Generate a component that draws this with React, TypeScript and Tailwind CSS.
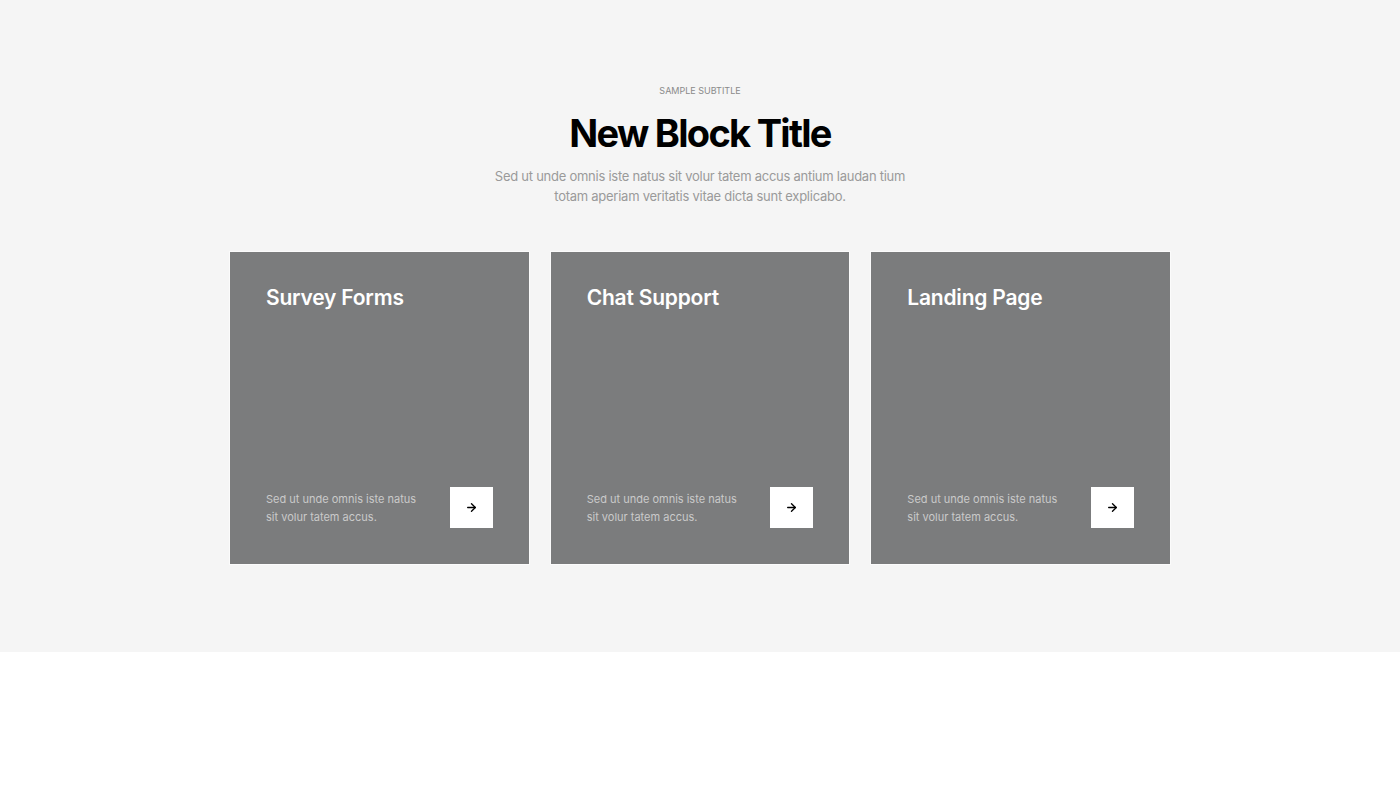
import { ArrowRight } from "lucide-react";

const cards = [
  { title: "Survey Forms" },
  { title: "Chat Support" },
  { title: "Landing Page" },
];

export default function App() {
  return (
    <div className="min-h-[788px] bg-white font-['Inter',sans-serif]">
      <section className="h-[652px] bg-[#f5f5f5] pt-[84px]">
        <div className="mx-auto flex w-[940px] flex-col items-center text-center">
          <p className="text-[9px] uppercase leading-[13px] text-[#8a8a8a]">Sample subtitle</p>
          <h1 className="mt-[12px] text-[38px] font-bold leading-[48px] tracking-[-0.045em] text-black">
            New Block Title
          </h1>
          <p className="mt-[9px] w-[430px] text-[13px] leading-[20px] tracking-[-0.02em] text-[#9a9a9a]">
            Sed ut unde omnis iste natus sit volur tatem accus antium laudan tium totam aperiam veritatis vitae dicta sunt explicabo.
          </p>
        </div>

        <div className="mx-auto mt-[46px] grid w-[940px] grid-cols-3 gap-[22px]">
          {cards.map((card) => (
            <div
              key={card.title}
              className="flex h-[312px] flex-col justify-between bg-[#7b7c7d] px-[36px] pb-[36px] pt-[32px] ring-1 ring-[#fbfbfb]"
            >
              <h2 className="text-[21px] font-semibold leading-[28px] tracking-[-0.01em] text-white">{card.title}</h2>
              <div className="flex items-center justify-between">
                <p className="w-[160px] text-[11px] leading-[18px] text-[#cacaca]">
                  Sed ut unde omnis iste natus sit volur tatem accus.
                </p>
                <button type="button" className="flex h-[41px] w-[43px] items-center justify-center bg-white text-black">
                  <ArrowRight size={13} strokeWidth={2.5} />
                </button>
              </div>
            </div>
          ))}
        </div>
      </section>
    </div>
  );
}
